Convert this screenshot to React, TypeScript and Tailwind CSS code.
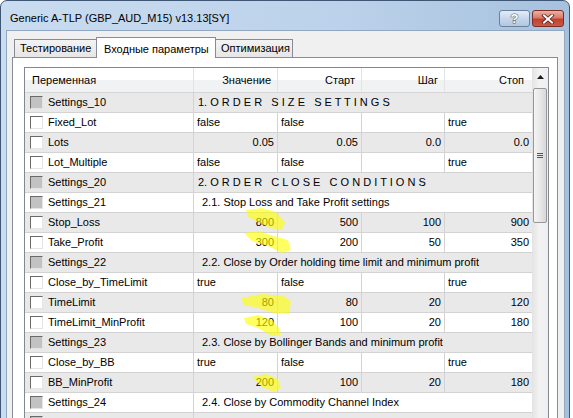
import React from "react";

type Row =
  | { kind: "group"; name: string; text: string; sub?: boolean }
  | { kind: "param"; name: string; values: string[]; numeric?: boolean };

// Input parameters as shown in the tester window
const rows: Row[] = [
  { kind: "group", name: "Settings_10", text: "1. O R D E R   S I Z E   S E T T I N G S" },
  { kind: "param", name: "Fixed_Lot", values: ["false", "false", "", "true"] },
  { kind: "param", name: "Lots", values: ["0.05", "0.05", "0.0", "0.0"], numeric: true },
  { kind: "param", name: "Lot_Multiple", values: ["false", "false", "", "true"] },
  { kind: "group", name: "Settings_20", text: "2. O R D E R   C L O S E   C O N D I T I O N S" },
  { kind: "group", name: "Settings_21", text: "2.1. Stop Loss and Take Profit settings", sub: true },
  { kind: "param", name: "Stop_Loss", values: ["800", "500", "100", "900"], numeric: true },
  { kind: "param", name: "Take_Profit", values: ["300", "200", "50", "350"], numeric: true },
  { kind: "group", name: "Settings_22", text: "2.2. Close by Order holding time limit and minimum profit", sub: true },
  { kind: "param", name: "Close_by_TimeLimit", values: ["true", "false", "", "true"] },
  { kind: "param", name: "TimeLimit", values: ["80", "80", "20", "120"], numeric: true },
  { kind: "param", name: "TimeLimit_MinProfit", values: ["120", "100", "20", "180"], numeric: true },
  { kind: "group", name: "Settings_23", text: "2.3. Close by Bollinger Bands and minimum profit", sub: true },
  { kind: "param", name: "Close_by_BB", values: ["true", "false", "", "true"] },
  { kind: "param", name: "BB_MinProfit", values: ["200", "100", "20", "180"], numeric: true },
  { kind: "group", name: "Settings_24", text: "2.4. Close by Commodity Channel Index", sub: true },
  { kind: "group", name: "", text: "" },
];

// yellow marker strokes drawn over the screenshot
const highlights = [
  "246,210 262,208 276,212 285,222 282,230 270,228 258,222 248,217",
  "244,233 258,231 274,236 288,240 291,250 282,253 268,246 252,241",
  "241,298 262,294 284,296 291,302 289,314 274,313 258,308 244,305",
  "244,318 258,315 272,320 279,328 281,336 272,336 258,328 246,324",
  "252,377 266,374 278,379 281,388 274,392 262,387",
];

const CheckBox = ({ filled }: { filled: boolean }) => (
  <span
    className={
      filled
        ? "w-[13px] h-[13px] shrink-0 border border-t-[#6a6a6a] border-l-[#6a6a6a] border-b-[#e4e4e4] border-r-[#e4e4e4] bg-[#c2c2c2]"
        : "w-[13px] h-[13px] shrink-0 border border-t-[#6a6a6a] border-l-[#6a6a6a] border-b-[#e4e4e4] border-r-[#e4e4e4] bg-white"
    }
  />
);

const NameCell = ({ name, filled }: { name: string; filled: boolean }) => (
  <div className="w-[169px] shrink-0 h-full flex items-center gap-[5px] pl-[5px] border-r border-[#d3d3d3]">
    <CheckBox filled={filled} />
    <span>{name}</span>
  </div>
);

const colWidths = ["w-[84px]", "w-[84px]", "w-[83px]"];

const ParamRow = ({ row, index }: { row: Row; index: number }) => {
  const bg = index % 2 === 0 ? "bg-[#e9e9e9]" : "bg-white";
  if (row.kind === "group") {
    return (
      <div className={`flex h-[20px] shrink-0 border-b border-[#d3d3d3] ${bg}`}>
        <NameCell name={row.name} filled />
        <div className={row.sub ? "flex-1 flex items-center pl-[8px] whitespace-pre" : "flex-1 flex items-center pl-[4px] whitespace-pre"}>
          {row.text}
        </div>
      </div>
    );
  }
  return (
    <div className={`flex h-[20px] shrink-0 border-b border-[#d3d3d3] ${bg}`}>
      <NameCell name={row.name} filled={false} />
      {row.values.map((v, i) => (
        <div
          key={i}
          className={[
            i < 3 ? colWidths[i] + " shrink-0 border-r border-[#d3d3d3]" : "flex-1",
            "h-full flex items-center",
            row.numeric ? "justify-end pr-[3px]" : "pl-[3px]",
          ].join(" ")}
        >
          {v}
        </div>
      ))}
    </div>
  );
};

const Scrollbar = () => (
  <div className="w-[16px] shrink-0 flex flex-col bg-[linear-gradient(to_right,#e3e3e3,#f3f3f3_45%,#eeeeee)]">
    <div className="h-[18px] flex items-center justify-center">
      <svg width="7" height="4" viewBox="0 0 7 4">
        <path d="M3.5 0 L7 4 L0 4 Z" fill="#1a1a1a" />
      </svg>
    </div>
    <div className="mx-[1px] mt-[2px] h-[135px] rounded-[2px] border border-[#979797] bg-[linear-gradient(to_right,#f4f4f4,#e8e8e8_50%,#d8d8d8)] flex flex-col items-center justify-center gap-[1px]">
      <span className="w-[6px] h-[1px] bg-[#555]" />
      <span className="w-[6px] h-[1px] bg-[#555]" />
      <span className="w-[6px] h-[1px] bg-[#555]" />
    </div>
  </div>
);

export default function App() {
  return (
    <div className="relative w-[573px] h-[418px] overflow-hidden bg-white font-['Liberation_Sans',Arial,sans-serif] text-[11px] text-black">
      {/* Window frame */}
      <div className="w-[570px] h-[440px] flex flex-col rounded-t-[7px] border border-[#3f5774] bg-[linear-gradient(to_right,#c9dcf0,#bcd2ea_60%,#a6c1de)]">
        {/* Title bar */}
        <div className="h-[29px] shrink-0 flex items-start pl-[9px] pr-[5px]">
          <span className="mt-[11px] leading-[13px] text-[11px] text-black">
            Generic A-TLP (GBP_AUD_M15) v13.13[SY]
          </span>
          <div className="ml-auto mt-[9px] flex gap-[2px]">
            <div className="w-[31px] h-[17px] rounded-[3px] border border-[#6a819e] bg-[linear-gradient(#e3ecf7,#c6d7eb_50%,#b2c7e0)] flex items-center justify-center">
              <span className="font-bold text-[13px] leading-none text-white [-webkit-text-stroke:1px_#4c5d74] [paint-order:stroke]">?</span>
            </div>
            <div className="w-[32px] h-[17px] rounded-[3px] border border-[#7b2e24] bg-[linear-gradient(#eab1a3,#d97c68_45%,#c3412f_55%,#c95a43)] flex items-center justify-center">
              <svg width="14" height="10" viewBox="0 0 14 10">
                <path d="M3 1.5 L11 8.5 M11 1.5 L3 8.5" stroke="#5a1f18" strokeWidth="3.6" strokeLinecap="square" />
                <path d="M3 1.5 L11 8.5 M11 1.5 L3 8.5" stroke="#ffffff" strokeWidth="2" strokeLinecap="square" />
              </svg>
            </div>
          </div>
        </div>

        {/* Client area */}
        <div className="flex-1 flex flex-col ml-[5px] mr-[4px] border border-b-0 border-[#92a8c2] bg-[#f0f0f0] pt-[6px]">
          {/* Tabs */}
          <div className="flex items-end ml-[7px]">
            <div className="w-[83px] h-[18px] border border-b-0 border-[#898c95] bg-[linear-gradient(#f3f3f3,#e6e6e6)] flex items-center pl-[5px]">
              Тестирование
            </div>
            <div className="relative z-10 -ml-[1px] -mb-[1px] w-[120px] h-[21px] border border-b-0 border-[#898c95] bg-white flex items-start pt-[3px] pl-[7px]">
              Входные параметры
            </div>
            <div className="-ml-[1px] w-[78px] h-[18px] border border-b-0 border-[#898c95] bg-[linear-gradient(#f3f3f3,#e6e6e6)] flex items-center pl-[5px]">
              Оптимизация
            </div>
          </div>

          {/* Tab panel */}
          <div className="flex-1 flex flex-col ml-[5px] mr-[6px] border border-[#898c95] bg-white pt-[9px] pl-[11px] pr-[8px]">
            <div className="flex-1 flex border border-[#828790] overflow-hidden">
              <div className="flex-1 flex flex-col">
                {/* Column header */}
                <div className="h-[25px] shrink-0 flex border-b border-[#d5d5d5] bg-[linear-gradient(#ffffff_0%,#ffffff_50%,#f1f2f4_51%,#f1f2f4_100%)]">
                  <div className="w-[169px] shrink-0 flex items-center pl-[7px] border-r border-[#e2e3e5]">Переменная</div>
                  <div className="w-[84px] shrink-0 flex items-center justify-end pr-[6px] border-r border-[#e2e3e5]">Значение</div>
                  <div className="w-[84px] shrink-0 flex items-center justify-end pr-[6px] border-r border-[#e2e3e5]">Старт</div>
                  <div className="w-[83px] shrink-0 flex items-center justify-end pr-[6px] border-r border-[#e2e3e5]">Шаг</div>
                  <div className="flex-1 flex items-center justify-end pr-[8px]">Стоп</div>
                </div>
                {rows.map((row, i) => (
                  <ParamRow key={i} row={row} index={i} />
                ))}
              </div>
              <Scrollbar />
            </div>
          </div>
        </div>
      </div>

      {/* Marker annotations */}
      <svg className="absolute inset-0 pointer-events-none" width="573" height="418" viewBox="0 0 573 418">
        {highlights.map((p, i) => (
          <polygon key={i} points={p} fill="#ffff00" fillOpacity="0.62" />
        ))}
      </svg>
    </div>
  );
}
